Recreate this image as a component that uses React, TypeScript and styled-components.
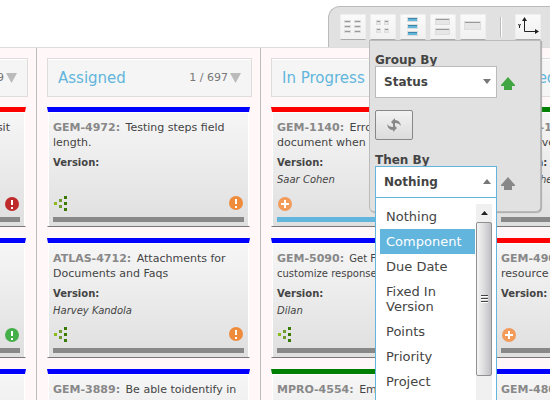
import React from "react";
import styled, { createGlobalStyle, css } from "styled-components";

const Global = createGlobalStyle`
  * { box-sizing: border-box; }
  html, body, #root { height: 100%; }
  body {
    margin: 0;
    overflow: hidden;
    background: #fff;
    color: #444;
    font-family: "DejaVu Sans", Verdana, sans-serif;
    font-size: 11px;
  }
  button, select { font-family: inherit; color: inherit; }
`;

const Page = styled.div`
  position: relative;
  display: flex;
  flex-direction: column;
  height: 100vh;
  overflow: hidden;
`;

const Top = styled.header`
  display: flex;
  justify-content: flex-end;
  flex: none;
  height: 47px;
  padding-top: 6px;
`;

const Toolbar = styled.div`
  display: flex;
  align-items: flex-start;
  gap: 4px;
  width: 222px;
  padding: 7px 0 0 11px;
  background: #e1e1e1;
  border: solid #bbb;
  border-width: 1px 0 0 1px;
  border-radius: 12px 0 0 0;
`;

const Tool = styled.button`
  flex: none;
  width: 26px;
  height: 26px;
  padding: 0;
  border: 1px solid #eee;
  border-bottom: 1px solid #aaa;
  background: linear-gradient(#fafafa, #f1f1f1);
  svg { display: block; }
`;

const Divider = styled.span`
  flex: none;
  width: 2px;
  height: 20px;
  margin: 3px 9px 0 10px;
  background: #bbb;
  border-right: 1px solid #fff;
`;

const Board = styled.main`
  display: grid;
  grid-auto-flow: column;
  grid-auto-columns: 224px;
  flex: 1;
  min-height: 0;
  margin-left: -187px;
  border-top: 1px solid #ddd;
  background: #fff7f8;
`;

const Column = styled.section`
  display: flex;
  flex-direction: column;
  gap: 11px;
  min-width: 0;
  padding: 10px 8px 0 10px;
  border-right: 1px solid #bbb;
`;

const ColumnHead = styled.div`
  display: flex;
  flex: none;
  align-items: center;
  justify-content: space-between;
  height: 39px;
  margin-bottom: -1px;
  padding: 0 10px;
  border: 1px solid #ddd;
  background: #f5f5f5;
  box-shadow: inset 0 1px #fff;
`;

const Title = styled.h2`
  margin: 0;
  color: #62b5dc;
  font-size: 15px;
  font-weight: 400;
  line-height: 20px;
`;

const Count = styled.span`
  display: flex;
  align-items: center;
  gap: 2px;
  margin-left: auto;
  color: #777;
`;

const CardBox = styled.article<{ $color: string }>`
  display: flex;
  flex: none;
  flex-direction: column;
  height: 120px;
  margin-right: 2px;
  padding: 8px 5px 4px;
  border: 1px solid transparent;
  border-top: 5px solid ${p => p.$color};
  border-bottom: 1px solid #777;
  background: linear-gradient(#f6f6f6, #dfdfdf) padding-box;
  box-shadow: inset 1px 1px #fff, inset -1px 0 #fff;
  line-height: 15px;
`;

const Summary = styled.p<{ $tail?: boolean; $small?: boolean }>`
  margin: 0;
  font-size: ${p => (p.$small ? 10 : 11)}px;
  white-space: nowrap;
  ${p => p.$tail && css`padding-right: 10px; text-align: right;`}
`;

const Line = styled.span`
  display: block;
  height: 15px;
`;

const Key = styled.b`
  margin-right: 2px;
  color: #888;
  font-size: 11px;
`;

const Version = styled.b`
  margin-top: 5px;
  font-size: 10px;
`;

const Person = styled.i`
  margin-top: 2px;
  font-size: 10px;
`;

const CardFoot = styled.div<{ $bar: string }>`
  display: flex;
  align-items: center;
  justify-content: space-between;
  margin-top: auto;
  padding: 0 1px 6px;
  border-bottom: 5px solid ${p => p.$bar};
  svg { display: block; }
`;

const Panel = styled.form`
  position: absolute;
  top: 40px;
  right: 9px;
  display: flex;
  flex-direction: column;
  width: 172px;
  height: 172px;
  padding: 13px 5px 0 5px;
  border: 1px solid #bbb;
  border-radius: 0 0 5px 5px;
  background: #e1e1e1;
  box-shadow: 1px 1px 1px #aaa;
`;

const Label = styled.label`
  font-size: 12px;
  font-weight: 700;
  line-height: 12px;
`;

const FieldRow = styled.div`
  display: flex;
  align-items: center;
  gap: 4px;
`;

const SelectWrap = styled.div`
  position: relative;
  width: 122px;
`;

const Caret = styled.span`
  position: absolute;
  top: 13px;
  right: 6px;
  pointer-events: none;
  svg { display: block; }
`;

const Direction = styled.button`
  padding: 3px 0 0;
  border: 0;
  background: none;
  svg { display: block; }
`;

const Select = styled.select<{ $open?: boolean }>`
  display: block;
  appearance: none;
  width: 100%;
  height: 32px;
  padding: 0 8px;
  border: 1px solid ${p => (p.$open ? "#62b5dc" : "#bbb")};
  border-radius: 0;
  outline: 0;
  background: #fff;
  font-size: 12px;
  font-weight: 700;
`;

const Swap = styled.button`
  display: flex;
  flex: none;
  align-items: center;
  justify-content: center;
  width: 38px;
  height: 30px;
  margin: 12px 0 14px;
  padding: 0;
  border: 1px solid #888;
  border-radius: 2px;
  background: linear-gradient(#f2f2f2, #dcdcdc);
`;

const Menu = styled.div`
  position: absolute;
  top: 31px;
  left: 0;
  display: flex;
  width: 122px;
  height: 240px;
  padding: 6px 4px 0;
  border: 1px solid #62b5dc;
  background: #fff;
`;

const Options = styled.ul`
  flex: 1;
  margin: 0;
  padding: 0;
  list-style: none;
`;

const Option = styled.li<{ $active?: boolean }>`
  padding: 5px 6px;
  font-size: 13px;
  line-height: 15px;
  ${p => p.$active && css`background: #62b5dc; color: #fff;`}
`;

const Scroll = styled.div`
  flex: none;
  width: 16px;
  margin-left: 1px;
  background: #f0f0f0;
`;

const ScrollUp = styled.div`
  display: flex;
  align-items: center;
  justify-content: center;
  height: 18px;
`;

const Thumb = styled.div`
  display: flex;
  align-items: center;
  justify-content: center;
  height: 154px;
  border: 1px solid #909090;
  border-radius: 2px;
  background: linear-gradient(90deg, #f5f5f5, #dcdcde 50%, #bfc0c4);
`;

const Triangle = ({ up, w = 8, h = 5, color = "#777" }: { up?: boolean; w?: number; h?: number; color?: string }) => (
  <svg width={w} height={h} viewBox="0 0 10 10" preserveAspectRatio="none">
    <path d={up ? "M0 10 5 0 10 10z" : "M0 0h10L5 10z"} fill={color} />
  </svg>
);

const Arrow = ({ color }: { color: string }) => (
  <svg width="14" height="13" viewBox="0 0 14 13">
    <path d="M7 0 14 8V9H11V13H3V9H0V8z" fill={color} />
  </svg>
);

const Tree = () => (
  <svg width="14" height="16" viewBox="0 0 14 16">
    <path fill="#8aba1f" d="M0 7h3v3H0z" />
    <path fill="#6d9b2c" d="M5 4h3v3H5zM5 10h3v3H5z" />
    <path fill="#3b7a00" d="M10 1h3v3h-3zM10 7h3v3h-3zM10 13h3v3h-3z" />
  </svg>
);

const Plus = () => (
  <svg width="14" height="14" viewBox="0 0 14 14">
    <circle cx="7" cy="7" r="7" fill="#f39b5b" />
    <path d="M7 3v8M3 7h8" stroke="#fff" strokeWidth="2" />
  </svg>
);

const Alert = ({ color }: { color: string }) => (
  <svg width="14" height="14" viewBox="0 0 14 14">
    <circle cx="7" cy="7" r="7" fill={color} />
    <path d="M6 3h2v5H6zM6 10h2v2H6z" fill="#fff" />
  </svg>
);

const Cells = ({ xs, ys, w, h, on }: { xs: number[]; ys: number[]; w: number; h: number; on?: boolean }) => (
  <svg width="24" height="24" viewBox="0 0 24 24">
    {xs.flatMap(x => ys.map(y => (
      <g key={`${x}-${y}`}>
        <path d={`M${x} ${y}h${w}v${h}h${-w}z`} fill="#ddd" />
        <path d={`M${x + 1} ${y + 1}h${w - 2}v${h - 2}h${2 - w}z`} fill={on ? "#62b5dc" : "#e6e6e6"} />
        <path d={`M${x + 1} ${y + 1}h${w - 2}v1h${2 - w}z`} fill={on ? "#3c86a8" : "#999"} />
      </g>
    )))}
  </svg>
);

type CardData = {
  color: string;
  id?: string;
  lines?: string[];
  small?: boolean;
  person?: string;
  version?: boolean;
  left?: "tree" | "plus";
  alert?: string;
  bar?: string;
};

const columns: { title?: string; count?: string; cards: CardData[] }[] = [
  {
    count: "9",
    cards: [
      { color: "red", lines: ["sit"], alert: "#bf2a2a" },
      { color: "blue", alert: "#45b04a" },
      { color: "blue" },
    ],
  },
  {
    title: "Assigned",
    count: "1 / 697",
    cards: [
      { color: "blue", id: "GEM-4972", lines: ["Testing steps field", "length."], version: true, left: "tree", alert: "#ef8c3c" },
      { color: "blue", id: "ATLAS-4712", lines: ["Attachments for", "Documents and Faqs"], version: true, person: "Harvey Kandola", left: "tree", alert: "#ef8c3c" },
      { color: "blue", id: "GEM-3889", lines: ["Be able toidentify in"] },
    ],
  },
  {
    title: "In Progress",
    cards: [
      { color: "red", id: "GEM-1140", lines: ["Error", "document when c"], version: true, person: "Saar Cohen", left: "plus", bar: "#62b5dc" },
      { color: "blue", id: "GEM-5090", lines: ["Get F", "customize response"], small: true, version: true, person: "Dilan", left: "tree" },
      { color: "green", id: "MPRO-4554", lines: ["Em"] },
    ],
  },
  {
    title: "Closed",
    cards: [
      { color: "green", id: "ATLAS-11", lines: ["Allow", "can move"], version: true, person: "Saar Cohen" },
      { color: "red", id: "GEM-4901", lines: ["Assign", "resource"], version: true, left: "plus" },
      { color: "blue", id: "GEM-4801", lines: ["Add"] },
    ],
  },
];

const Card = ({ data }: { data: CardData }) => (
  <CardBox $color={data.color}>
    <Summary $tail={!data.id} $small={data.small}>
      {data.lines?.map((line, i) => (
        <Line key={i}>
          {i === 0 && data.id && <><Key>{data.id}:</Key>{" "}</>}
          {line}
        </Line>
      ))}
    </Summary>
    {data.version && <Version>Version:</Version>}
    {data.person && <Person>{data.person}</Person>}
    <CardFoot $bar={data.bar ?? "#888"}>
      <span>{data.left === "tree" ? <Tree /> : data.left === "plus" ? <Plus /> : null}</span>
      {data.alert && <Alert color={data.alert} />}
    </CardFoot>
  </CardBox>
);

const options = ["Nothing", "Component", "Due Date", "Fixed In Version", "Points", "Priority", "Project"];

export default function App() {
  return (
    <Page>
      <Global />
      <Top>
        <Toolbar role="toolbar">
          <Tool aria-label="Small grid"><Cells xs={[3, 13]} ys={[5, 10, 15]} w={7} h={3} /></Tool>
          <Tool aria-label="Tiles"><Cells xs={[5, 13]} ys={[5, 13]} w={5} h={5} /></Tool>
          <Tool aria-label="List"><Cells xs={[6]} ys={[2, 9, 16]} w={11} h={5} on /></Tool>
          <Tool aria-label="Rows"><Cells xs={[4]} ys={[3, 13]} w={15} h={7} /></Tool>
          <Tool aria-label="Single"><Cells xs={[3]} ys={[6]} w={17} h={9} /></Tool>
          <Divider />
          <Tool aria-label="Axes">
            <svg width="24" height="24" viewBox="0 0 24 24" fill="none" stroke="#222">
              <path d="M8.500 4V16.500H22M2.500 9l1 2 1-2M3.500 11v2" />
              <path d="M8.500 2 11 6H6zM23 16.500 19 19V14z" fill="#222" stroke="none" />
            </svg>
          </Tool>
        </Toolbar>
      </Top>
      <Board>
        {columns.map((c, i) => (
          <Column key={i}>
            <ColumnHead>
              {c.title && <Title>{c.title}</Title>}
              {c.count && <Count>{c.count}<Triangle w={11} h={10} color="#bbb" /></Count>}
            </ColumnHead>
            {c.cards.map((d, j) => <Card key={j} data={d} />)}
          </Column>
        ))}
      </Board>
      <Panel>
        <Label htmlFor="group">Group By</Label>
        <FieldRow>
          <SelectWrap>
            <Select id="group"><option>Status</option></Select>
            <Caret><Triangle /></Caret>
          </SelectWrap>
          <Direction type="button" aria-label="Group ascending"><Arrow color="#41a541" /></Direction>
        </FieldRow>
        <Swap type="button" aria-label="Swap">
          <svg width="16" height="14" viewBox="0 0 16 14" fill="#888">
            <path d="M5 4 9 0v2q5 0 6 6-2-3-6-3v3zM11 10l-4 4v-2Q2 12 1 6q2 3 6 3V6z" />
          </svg>
        </Swap>
        <Label htmlFor="then">Then By</Label>
        <FieldRow>
          <SelectWrap>
            <Select id="then" $open><option>Nothing</option></Select>
            <Caret><Triangle up /></Caret>
            <Menu>
              <Options role="listbox" aria-label="Then By">
                {options.map(o => (
                  <Option key={o} role="option" aria-selected={o === "Component"} $active={o === "Component"}>{o}</Option>
                ))}
              </Options>
              <Scroll>
                <ScrollUp><Triangle up w={7} h={4} color="#222" /></ScrollUp>
                <Thumb>
                  <svg width="7" height="9" viewBox="0 0 7 9">
                    <path d="M0 .5h7M0 3.500h7M0 6.500h7" stroke="#444" />
                    <path d="M0 1.500h7M0 4.500h7M0 7.500h7" stroke="#fff" />
                  </svg>
                </Thumb>
              </Scroll>
            </Menu>
          </SelectWrap>
          <Direction type="button" aria-label="Then ascending"><Arrow color="#888" /></Direction>
        </FieldRow>
      </Panel>
    </Page>
  );
}
